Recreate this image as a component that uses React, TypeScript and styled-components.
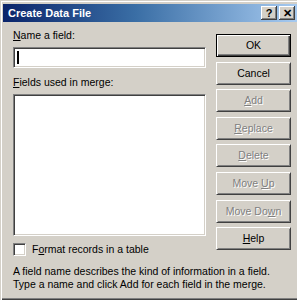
import styled, { createGlobalStyle } from "styled-components";

const GlobalStyle = createGlobalStyle`
  html, body {
    margin: 0;
    padding: 0;
    background: #d4d0c8;
  }
  * {
    box-sizing: border-box;
  }
`;

const Window = styled.div`
  width: 297px;
  height: 300px;
  padding: 4px 0 3px 3px;
  background: #d4d0c8;
  font-family: "Liberation Sans", Arial, sans-serif;
  font-size: 10.5px;
  line-height: 13px;
  color: #000;
  display: flex;
  flex-direction: column;
  box-shadow: inset 1px 1px #d4d0c8, inset 2px 2px #ffffff,
    inset 0 -1px #404040, inset 0 -2px #808080;
  overflow: hidden;
`;

const TitleBar = styled.div`
  height: 18px;
  display: flex;
  align-items: center;
  padding: 0 2px 0 5px;
  background: linear-gradient(to right, #0a246a 0%, #3a6ea5 45%, #a6caf0 100%);
  color: #fff;
  font-weight: bold;
  font-size: 11px;
`;

const TitleText = styled.span`
  flex: 1;
`;

const TitleButton = styled.div<{ $gap?: boolean }>`
  width: 16px;
  height: 14px;
  margin-left: ${(p) => (p.$gap ? "2px" : "0")};
  background: #d4d0c8;
  color: #000;
  display: flex;
  align-items: center;
  justify-content: center;
  box-shadow: inset -1px -1px #404040, inset 1px 1px #ffffff,
    inset -2px -2px #808080;
  font-size: 11px;
  font-weight: bold;
  line-height: 14px;
`;

const Body = styled.div`
  flex: 1;
  display: flex;
  padding: 7px 0 0 10px;
  gap: 10px;
`;

const LeftColumn = styled.div`
  width: 193px;
  display: flex;
  flex-direction: column;
`;

const Label = styled.div<{ $top?: number }>`
  margin-top: ${(p) => p.$top ?? 0}px;
  white-space: nowrap;
`;

const Key = styled.span`
  text-decoration: underline;
`;

const Sunken = styled.div<{ $height: number; $top: number }>`
  height: ${(p) => p.$height}px;
  margin-top: ${(p) => p.$top}px;
  background: #fff;
  border-top: 1px solid #808080;
  border-left: 1px solid #808080;
  border-right: 1px solid #ffffff;
  border-bottom: 1px solid #ffffff;
  box-shadow: inset 1px 1px #404040, inset -1px -1px #d4d0c8;
  position: relative;
`;

const Caret = styled.div`
  position: absolute;
  left: 3px;
  top: 3px;
  width: 2px;
  height: 13px;
  background: #000;
`;

const CheckRow = styled.label`
  margin-top: 7px;
  display: flex;
  align-items: center;
  gap: 6px;
  white-space: nowrap;
`;

const CheckBox = styled.span`
  width: 13px;
  height: 13px;
  background: #fff;
  border-top: 1px solid #808080;
  border-left: 1px solid #808080;
  border-right: 1px solid #ffffff;
  border-bottom: 1px solid #ffffff;
  box-shadow: inset 1px 1px #404040, inset -1px -1px #d4d0c8;
`;

const Info = styled.p`
  margin: 9px 0 0;
  width: 280px;
  white-space: nowrap;
`;

const ButtonColumn = styled.div`
  width: 75px;
  margin-top: 5px;
  display: flex;
  flex-direction: column;
  gap: 4.6px;
`;

const Button = styled.div<{ $default?: boolean; $disabled?: boolean }>`
  height: 23px;
  display: flex;
  align-items: center;
  justify-content: center;
  background: #d4d0c8;
  color: ${(p) => (p.$disabled ? "#808080" : "#000")};
  text-shadow: ${(p) => (p.$disabled ? "1px 1px #ffffff" : "none")};
  border: 1px solid;
  border-color: ${(p) =>
    p.$default ? "#000" : "#ffffff #404040 #404040 #ffffff"};
  box-shadow: ${(p) =>
    p.$default
      ? "inset 1px 1px #ffffff, inset -1px -1px #404040, inset -2px -2px #808080"
      : "inset 1px 1px #d4d0c8, inset -1px -1px #808080"};
  white-space: pre;
`;

const buttons: { label: React.ReactNode; isDefault?: boolean; disabled?: boolean }[] = [
  { label: "OK", isDefault: true },
  { label: "Cancel" },
  { label: <><Key>A</Key>dd</>, disabled: true },
  { label: <><Key>R</Key>eplace</>, disabled: true },
  { label: <><Key>D</Key>elete</>, disabled: true },
  { label: <>{"Move "}<Key>U</Key>p</>, disabled: true },
  { label: <>{"Move Do"}<Key>w</Key>n</>, disabled: true },
  { label: <><Key>H</Key>elp</> },
];

export default function App() {
  return (
    <>
      <GlobalStyle />
      <Window>
        <TitleBar>
          <TitleText>Create Data File</TitleText>
          <TitleButton>?</TitleButton>
          <TitleButton $gap>✕</TitleButton>
        </TitleBar>
        <Body>
          <LeftColumn>
            <Label>
              <Key>N</Key>ame a field:
            </Label>
            <Sunken $height={21} $top={5}>
              <Caret />
            </Sunken>
            <Label $top={8}>
              <Key>F</Key>ields used in merge:
            </Label>
            <Sunken $height={142} $top={5} />
            <CheckRow>
              <CheckBox />
              <span>
                F<Key>o</Key>rmat records in a table
              </span>
            </CheckRow>
            <Info>
              A field name describes the kind of information in a field.
              <br />
              Type a name and click Add for each field in the merge.
            </Info>
          </LeftColumn>
          <ButtonColumn>
            {buttons.map((b, i) => (
              <Button key={i} $default={b.isDefault} $disabled={b.disabled}>
                {b.label}
              </Button>
            ))}
          </ButtonColumn>
        </Body>
      </Window>
    </>
  );
}
